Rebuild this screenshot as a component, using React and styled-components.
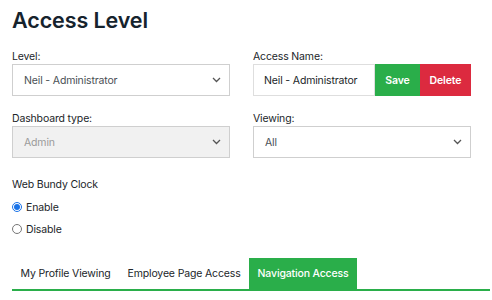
import React from "react";
import styled, { createGlobalStyle } from "styled-components";

const Global = createGlobalStyle`
  html, body { margin: 0; padding: 0; background: #fff; }
  body { font-family: Inter, "Noto Sans", sans-serif; color: #212529; }
  * { box-sizing: border-box; }
`;

const Page = styled.div`
  width: 492px;
  padding: 6px 0 0 12px;
`;

const Title = styled.h2`
  margin: 0;
  font-size: 21.5px;
  line-height: 28px;
  font-weight: 600;
  color: #16232d;
  letter-spacing: -0.1px;
`;

const Grid = styled.div`
  display: grid;
  grid-template-columns: 218px 218px;
  column-gap: 23px;
  row-gap: 16px;
  margin-top: 16px;
`;

const Field = styled.div`
  display: flex;
  flex-direction: column;
`;

const Label = styled.label`
  font-size: 10.5px;
  letter-spacing: -0.15px;
  line-height: 14px;
  color: #212529;
`;

const SelectBox = styled.div`
  height: 32px;
  border: 1px solid #cfcfcf;
  background: ${(p) => (p.$disabled ? "#f1f1f1" : "#fff")};
  color: ${(p) => (p.$disabled ? "#9a9a9a" : "#4a4f55")};
  font-size: 10.5px;
  letter-spacing: -0.15px;
  display: flex;
  align-items: center;
  justify-content: space-between;
  padding: 0 8px 0 11px;
`;

const InputRow = styled.div`
  display: flex;
  height: 32px;
`;

const TextInput = styled.div`
  flex: 1;
  border: 1px solid #dedede;
  font-size: 10.5px;
  letter-spacing: -0.15px;
  color: #212529;
  display: flex;
  align-items: center;
  padding-left: 10px;
`;

const Btn = styled.button`
  border: none;
  height: 32px;
  width: ${(p) => p.$w}px;
  background: ${(p) => p.$bg};
  color: #fff;
  font-family: inherit;
  font-size: 10.5px;
  letter-spacing: -0.1px;
  font-weight: 600;
  padding: 0;
`;

const Section = styled.div`
  margin-top: 20px;
`;

const SectionTitle = styled.div`
  font-size: 10.5px;
  letter-spacing: -0.15px;
  line-height: 14px;
  color: #212529;
`;

const RadioRow = styled.label`
  display: flex;
  align-items: center;
  height: 22px;
  font-size: 10.5px;
  letter-spacing: -0.15px;
  color: #212529;
  margin-top: ${(p) => p.$mt || 0}px;
`;

const Radio = styled.input`
  width: 10px;
  height: 10px;
  margin: 0 4px 0 0;
  accent-color: #1a73e8;
`;

const Tabs = styled.div`
  display: flex;
  margin-top: 18px;
  width: 478px;
  border-bottom: 2px solid #2aae4a;
`;

const Tab = styled.div`
  height: 31px;
  display: flex;
  align-items: center;
  padding: 0 8.5px;
  font-size: 10.5px;
  letter-spacing: -0.15px;
  color: ${(p) => (p.$active ? "#fff" : "#212529")};
  background: ${(p) => (p.$active ? "#2aae4a" : "transparent")};
  font-weight: ${(p) => (p.$active ? 500 : 400)};
`;

const Chevron = () => (
  <svg width="9" height="6" viewBox="0 0 9 6">
    <polyline points="1,1 4.5,4.5 8,1" fill="none" stroke="#555" strokeWidth="1.3" />
  </svg>
);

export default function App() {
  return (
    <Page>
      <Global />
      <Title>Access Level</Title>
      <Grid>
        <Field>
          <Label>Level:</Label>
          <SelectBox>
            <span>Neil - Administrator</span>
            <Chevron />
          </SelectBox>
        </Field>
        <Field>
          <Label>Access Name:</Label>
          <InputRow>
            <TextInput>Neil - Administrator</TextInput>
            <Btn $w={45} $bg="#2aae4a">Save</Btn>
            <Btn $w={51} $bg="#dc2a3f">Delete</Btn>
          </InputRow>
        </Field>
        <Field>
          <Label>Dashboard type:</Label>
          <SelectBox $disabled>
            <span>Admin</span>
            <Chevron />
          </SelectBox>
        </Field>
        <Field>
          <Label>Viewing:</Label>
          <SelectBox>
            <span>All</span>
            <Chevron />
          </SelectBox>
        </Field>
      </Grid>
      <Section>
        <SectionTitle>Web Bundy Clock</SectionTitle>
        <RadioRow $mt={4}>
          <Radio type="radio" name="wb" defaultChecked />
          Enable
        </RadioRow>
        <RadioRow>
          <Radio type="radio" name="wb" />
          Disable
        </RadioRow>
      </Section>
      <Tabs>
        <Tab>My Profile Viewing</Tab>
        <Tab>Employee Page Access</Tab>
        <Tab $active>Navigation Access</Tab>
      </Tabs>
    </Page>
  );
}
